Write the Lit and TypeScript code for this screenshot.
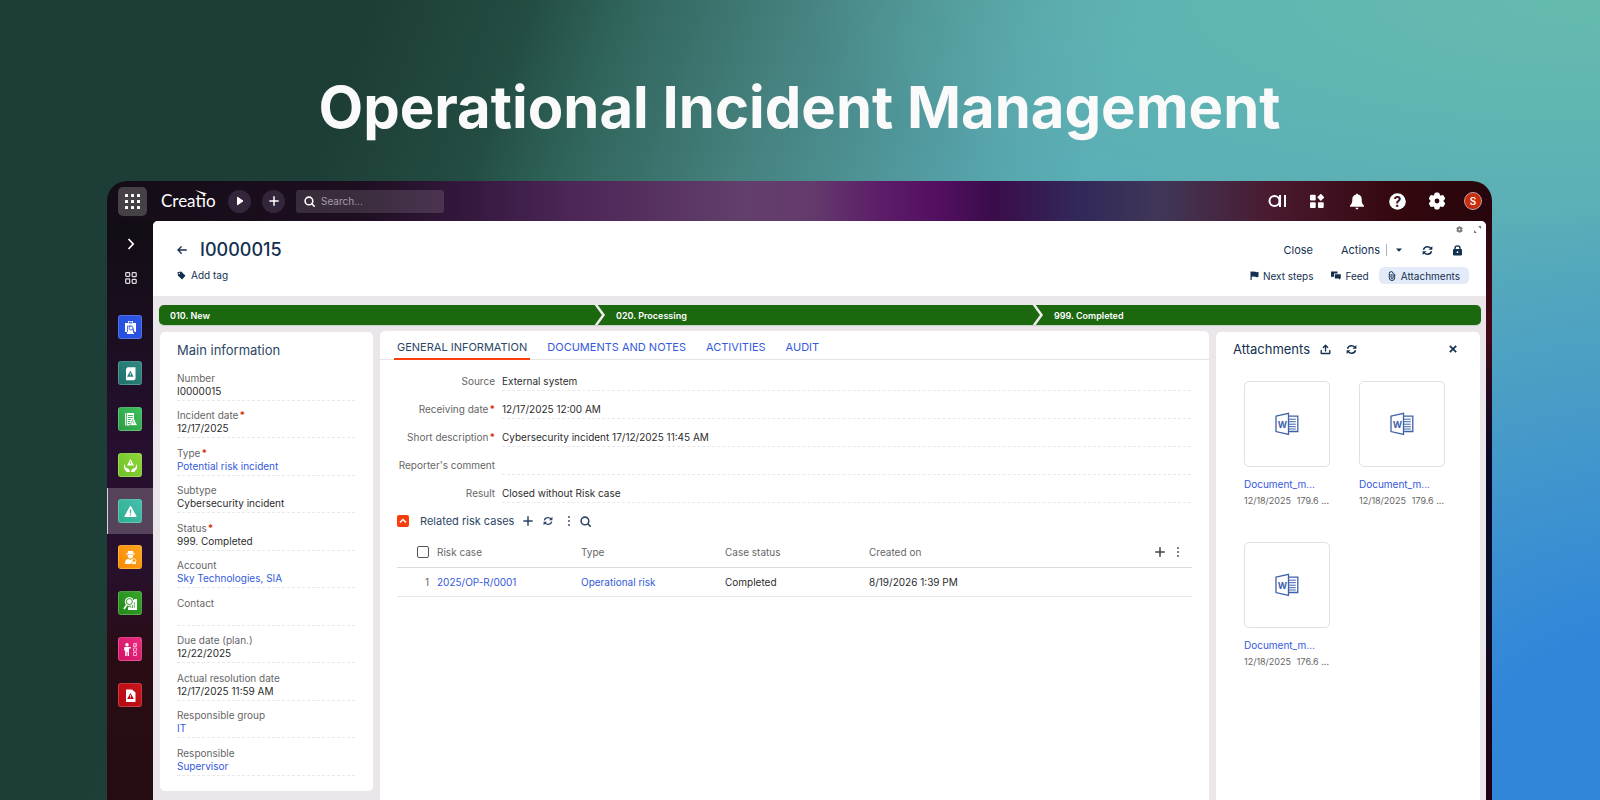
import { LitElement, html, css, svg } from "lit";
import { customElement } from "lit/decorators.js";
import { classMap } from "lit/directives/class-map.js";

const icon = (w: number, h: number, box: string, body: unknown) =>
  html`<svg class="icon" width=${w} height=${h} viewBox=${box} aria-hidden="true">${body}</svg>`;

const refresh = (s: number) => icon(s, s, "0 0 12 12", svg`
  <g fill="none" stroke="currentColor" stroke-width="1.6">
    <path d="M1.6 5.2C2.2 3 4 1.9 6 1.9c1.5 0 2.8.7 3.7 1.8"/><path d="M10.4 6.8C9.8 9 8 10.1 6 10.1c-1.5 0-2.8-.7-3.7-1.8"/>
  </g><path fill="currentColor" d="M11.3 1v4.2H7.1zM.7 11V6.8h4.2z"/>`);
const plus = (s: number) => icon(s, s, "0 0 12 12", svg`<path d="M6 1v10M1 6h10" stroke="currentColor" stroke-width="1.8" stroke-linecap="round"/>`);
const dots = () => icon(4, 12, "0 0 4 12", svg`<g fill="currentColor"><circle cx="2" cy="2" r=".9"/><circle cx="2" cy="6" r=".9"/><circle cx="2" cy="10" r=".9"/></g>`);
const search = (s: number) => icon(s, s, "0 0 12 12", svg`<g fill="none" stroke="currentColor" stroke-width="1.7" stroke-linecap="round"><circle cx="5.4" cy="5.4" r="4.2"/><path d="M8.8 8.8l2.3 2.3"/></g>`);
const gear = (s: number) => icon(s, s, "0 0 20 20", svg`
  <circle cx="10" cy="10" r="5" fill="none" stroke="currentColor" stroke-width="4.6"/>
  <g fill="currentColor">${[0, 60, 120, 180, 240, 300].map(a => svg`<rect x="7" y="0.6" width="6" height="5.4" rx="2" transform=${`rotate(${a} 10 10)`}/>`)}</g>`);
const word = () => icon(24, 24, "0 0 24 24", svg`
  <g fill="none" stroke="#3f62a8" stroke-width="1.3"><path d="M1 4.2L13.500 1.400v21L1 19.600z"/><path d="M13.500 4.200h9.300v15.300h-9.300"/>
  <path d="M14 7.200h6.800M14 9.700h6.800M14 12.200h6.800M14 14.700h6.800M14 17h6.800" stroke-width="1"/></g>
  <text x="7.300" y="15.500" text-anchor="middle" font-size="9" font-weight="700" fill="#3f62a8">W</text>`);

const appIcons = [
  { from: "#2450dc", to: "#2e55e6", body: svg`<path fill="#fff" d="M2 3h3V1h5v2h3v9h-2v2H4v-2H2z"/><path fill="none" stroke="#2b50dd" stroke-width=".8" d="M6 3h3V2H6zM4.500 12V6M4.500 6h4M10.500 13V8.500"/><circle cx="8" cy="8" r="2" fill="none" stroke="#2b50dd" stroke-width=".8"/><path d="M9.500 9.500l2 2.500" stroke="#2b50dd" stroke-width=".9"/>` },
  { from: "#1f6f6b", to: "#2f8a80", body: svg`<path fill="#fff" d="M3 3l1.500-1.700h8V13L11 14.200H3z"/><path fill="#267a73" d="M7.300 4.800l3.300 6H4z"/><path stroke="#fff" stroke-width=".8" d="M7.300 7v2M7.300 9.500v.7"/>` },
  { from: "#2f9a45", to: "#3cc35c", body: svg`<path fill="#fff" d="M2 1h9v6l3 6.500H2z"/><path fill="none" stroke="#33a94c" stroke-width=".9" d="M3.300 1v12.500M4.800 3.500h5M4.800 5.500h5M4.800 7.500h3M4.800 9.500h2.500M4.800 11.500h2"/><path fill="none" stroke="#33a94c" stroke-width=".7" d="M10.200 7l-3.500 6.500h7M10.300 9.500v2"/>` },
  { from: "#6fc025", to: "#8fd63a", body: svg`<path fill="#fff" d="M7.500 1L11 7.600H4zM1 6.500c1.200 0 1.300 1.500 1.400 3L5 10.500c1.500.8 1.800 1.800 1.800 3.500H4C2.500 12.500 1 11 1 9.500zM14 6.500c-1.200 0-1.300 1.500-1.400 3l-2.600 1c-1.500.8-1.800 1.800-1.800 3.500H11c1.500-1.500 3-3 3-4.500z"/><path stroke="#7ccb30" stroke-width=".9" d="M7.500 3.500v2.200"/>` },
  { from: "#2fae90", to: "#45bfae", body: svg`<path fill="#fff" stroke="#fff" stroke-width="1" stroke-linejoin="round" d="M7.500 2.200l5.700 10.300H1.800z"/><path stroke="#36b39b" stroke-width="1.300" d="M7.500 5.500v3.700M7.500 10.300v1.300"/>` },
  { from: "#f78a00", to: "#ffa51c", body: svg`<path fill="#fff" d="M5 1h5l.5 2.500H12v1H3v-1h1.500zM4.700 5h5.600c0 2-1 3.500-2.800 3.500S4.700 7 4.700 5zM2 14c0-3.500 1-5 3.500-5.300l2 1.300 2-1.300C12 9 13 10.500 13 14z"/><circle cx="11" cy="10.500" r="1.900" fill="#ff9a0c" stroke="#fff" stroke-width=".8"/><path d="M9.500 12l-2 2" stroke="#ff9a0c" stroke-width=".9"/>` },
  { from: "#24871c", to: "#36a528", body: svg`<path fill="#fff" d="M8 4h3V3h3v11H5v-2.500l3-1.500z"/><circle cx="6.300" cy="5.600" r="4" fill="#fff" stroke="#fff" stroke-width="1"/><circle cx="6.300" cy="5.600" r="3" fill="none" stroke="#2c9622"/><path stroke="#fff" stroke-width="1.600" d="M3.800 8.600L1 13"/><path stroke="#2c9622" stroke-width=".7" d="M9.500 9v3M11.300 6v6M7.800 10v2"/>` },
  { from: "#d01466", to: "#ea2b80", body: svg`<circle cx="4" cy="2.700" r="1.700" fill="#fff"/><path fill="#fff" d="M1.500 5h6.300v1.600H6V14H4.500v-4h-.8v4H2.200V8.500H1z"/><path fill="none" stroke="#ffb5d2" stroke-width=".9" d="M10.500 1.500h3v3h-3zM10.500 6h3v3h-3zM10.500 10.500h3v3h-3zM10.500 3l1 1 2-2.500"/>` },
  { from: "#b40a10", to: "#c8151c", body: svg`<path fill="#fff" d="M3 1.500h6l3.500 3V14H3z"/><path fill="#bb0d14" d="M7.500 5l3.400 6H4.100z"/><path stroke="#fff" stroke-width=".8" d="M7.500 7v2M7.500 9.600v.7"/>` },
];

const mainFields = [
  { label: "Number", value: "I0000015" },
  { label: "Incident date", value: "12/17/2025", required: true },
  { label: "Type", value: "Potential risk incident", required: true, link: true },
  { label: "Subtype", value: "Cybersecurity incident" },
  { label: "Status", value: "999. Completed", required: true },
  { label: "Account", value: "Sky Technologies, SIA", link: true },
  { label: "Contact", value: "" },
  { label: "Due date (plan.)", value: "12/22/2025" },
  { label: "Actual resolution date", value: "12/17/2025 11:59 AM" },
  { label: "Responsible group", value: "IT", link: true },
  { label: "Responsible", value: "Supervisor", link: true },
];

const generalFields = [
  { id: "source", label: "Source", value: "External system" },
  { id: "received", label: "Receiving date", value: "12/17/2025 12:00 AM", required: true },
  { id: "description", label: "Short description", value: "Cybersecurity incident 17/12/2025 11:45 AM", required: true },
  { id: "comment", label: "Reporter's comment", value: "" },
  { id: "result", label: "Result", value: "Closed without Risk case" },
];

const files = [
  { name: "Document_m...", date: "12/18/2025", size: "179.6 ..." },
  { name: "Document_m...", date: "12/18/2025", size: "179.6 ..." },
  { name: "Document_m...", date: "12/18/2025", size: "176.6 ..." },
];

const base = css`
  :host { box-sizing: border-box; font-family: Inter, "Liberation Sans", sans-serif; }
  *, *::before, *::after { box-sizing: border-box; }
  button, input { font: inherit; color: inherit; border: 0; padding: 0; margin: 0; background: none; }
  button { cursor: pointer; display: inline-flex; align-items: center; justify-content: center; }
  a { color: #3459dc; text-decoration: none; }
  h1, h2, p, dl, dd, dt, ul { margin: 0; padding: 0; font-size: inherit; font-weight: inherit; }
  ul { list-style: none; }
  .icon { display: block; flex: none; }
  .required::after { content: "*"; color: #d8330d; font-weight: 700; margin-left: 1px; }
`;

@customElement("top-bar")
class TopBar extends LitElement {
  static styles = [base, css`
    :host { display: flex; align-items: center; height: 40px; padding: 0 10px 0 11px; color: #fff; }
    .apps { width: 29px; height: 29px; border-radius: 5px; background: #454147; }
    .logo { position: relative; width: 54px; margin: 0 13px 0 14px; font-family: Lato, sans-serif; font-size: 17px; line-height: 24px; }
    .swoosh { position: absolute; left: 34px; top: 1px; }
    .round { width: 23px; height: 23px; border-radius: 50%; background: #33263a; margin-right: 11px; }
    .search { display: flex; align-items: center; gap: 6px; width: 148px; height: 23px; padding: 0 8px; border-radius: 3px; background: rgb(255 255 255 / 13%); }
    .search input { flex: 1; min-width: 0; font-size: 10px; outline: 0; }
    .search input::placeholder { color: #a79bab; opacity: 1; }
    .tools { display: flex; align-items: center; gap: 20px; margin-left: auto; }
    .tools button { width: 20px; height: 24px; }
    .tools .avatar { width: 18px; height: 18px; margin-left: -3px; border: 1px solid #b9a4a8; border-radius: 50%; background: #cb2d0c; font-size: 10px; font-weight: 600; }
  `];
  render() {
    return html`
      <button class="apps" aria-label="Applications">${icon(15, 15, "0 0 15 15", svg`<g fill="#fff">${[0, 6, 12].map(y => [0, 6, 12].map(x => svg`<rect x=${x} y=${y} width="3" height="3" rx=".5"/>`))}</g>`)}</button>
      <div class="logo">Creatio<span class="swoosh">${icon(12, 5, "0 0 12 5", svg`<path fill="#fff" d="M0 0l12 3.500-3.500 1.200z"/>`)}</span></div>
      <button class="round" aria-label="Run process">${icon(10, 10, "0 0 10 10", svg`<path fill="#fff" d="M2.500 1.200l5.500 3.800-5.500 3.800z" stroke="#fff" stroke-linejoin="round"/>`)}</button>
      <button class="round" aria-label="Add">${plus(10)}</button>
      <label class="search">${search(11)}<input type="search" aria-label="Search" placeholder="Search..." /></label>
      <div class="tools">
        <button aria-label="AI assistant">${icon(19, 14, "0 0 19 14", svg`<g fill="none" stroke="#fff" stroke-width="2"><circle cx="6.500" cy="7" r="5"/><path d="M12 1v12M17 1v12"/></g>`)}</button>
        <button aria-label="Widgets">${icon(14, 14, "0 0 14 14", svg`<g fill="#fff"><rect y=".8" width="5.700" height="5.700" rx="1"/><rect y="8.300" width="5.700" height="5.700" rx="1"/><rect x="8" y="8.300" width="5.700" height="5.700" rx="1"/><path d="M10.800-.3L14.400 3.300 10.800 6.900 7.200 3.300z"/></g>`)}</button>
        <button aria-label="Notifications">${icon(14, 17, "0 0 14 17", svg`<path fill="#fff" d="M6 1.500q1-1.800 2 0 3.500.8 3.700 4.500c0 4 .5 4.500 2.300 6.800v1H0v-1C1.800 10.500 2.300 10 2.300 6 2.500 2.300 6 1.500 6 1.500zM5.500 14.700h3q-.2 1.700-1.500 1.700t-1.500-1.700z"/>`)}</button>
        <button aria-label="Help">${icon(17, 17, "0 0 17 17", svg`<circle cx="8.500" cy="8.500" r="8.300" fill="#fff"/><text x="8.500" y="13.500" text-anchor="middle" font-size="14" font-weight="700" fill="#3a1020">?</text>`)}</button>
        <button aria-label="Settings">${gear(18)}</button>
        <button class="avatar" aria-label="Profile">S</button>
      </div>`;
  }
}

@customElement("side-bar")
class SideBar extends LitElement {
  static styles = [base, css`
    :host { display: flex; flex-direction: column; width: 46px; color: #fff; }
    .nav { display: flex; align-items: center; justify-content: center; height: 34px; margin-left: 1px; }
    .nav.first { margin-top: 6px; }
    .list { margin-top: 9px; }
    .item { display: flex; align-items: center; justify-content: flex-start; padding-left: 10px; height: 46px; width: 46px; border-left: 1px solid transparent; }
    .item.active { background: rgb(255 255 255 / 22%); border-left-color: #d9d0dc; }
    .tile { display: flex; align-items: center; justify-content: center; width: 24px; height: 24px; border-radius: 3px; border: 1px solid rgb(255 255 255 / 18%); }
  `];
  render() {
    return html`
      <button class="nav first" aria-label="Expand">${icon(8, 12, "0 0 8 12", svg`<path d="M1.500 1l4.700 5-4.700 5" fill="none" stroke="#fff" stroke-width="1.700"/>`)}</button>
      <button class="nav" aria-label="Workplaces">${icon(12, 12, "0 0 12 12", svg`<g fill="none" stroke="#e4dfe6" stroke-width="1.200"><rect x=".7" y=".7" width="4" height="3.600" rx=".8"/><rect x="7.200" y=".7" width="4" height="4" rx=".8"/><rect x=".7" y="6.800" width="4" height="4.500" rx=".8"/><rect x="7.200" y="7.400" width="4" height="4" rx=".8"/></g>`)}</button>
      <ul class="list">
        ${appIcons.map((a, i) => html`<li><button class=${classMap({ item: true, active: i === 4 })} aria-label=${`Section ${i + 1}`}>
          <span class="tile" style=${`background:linear-gradient(45deg,${a.from},${a.to})`}>${icon(15, 15, "0 0 15 15", a.body)}</span></button></li>`)}
      </ul>`;
  }
}

@customElement("page-header")
class PageHeader extends LitElement {
  static styles = [base, css`
    :host { display: flex; justify-content: space-between; height: 75px; padding: 0 17px 0 24px; background: #fff; border-radius: 5px 5px 0 0; color: #14304f; font-size: 10px; }
    .left { padding-top: 17px; }
    .title { display: flex; align-items: center; gap: 13px; height: 24px; }
    .title h1 { font-size: 18px; line-height: 24px; font-weight: 500; }
    .tag { gap: 5px; height: 16px; margin-top: 5px; }
    .right { display: flex; flex-direction: column; align-items: flex-end; }
    .tiny { display: flex; gap: 11px; height: 17px; align-items: center; margin-right: -12px; color: #777; }
    .actions { display: flex; align-items: center; height: 24px; margin-right: 7px; font-size: 11px; }
    .close { margin-right: 28px; }
    .rule { width: 1px; height: 12px; margin: 0 9px 0 6px; background: #a9b3bf; }
    .caret { margin-right: 20px; }
    .lock { margin-left: 20px; }
    .views { display: flex; align-items: center; gap: 10px; margin-top: 5px; }
    .views button { gap: 4px; height: 17px; }
    .views .feed { margin-left: 8px; }
    .views .on { padding: 0 9px; gap: 5px; border-radius: 5px; background: #e3ebfb; }
  `];
  render() {
    return html`
      <div class="left">
        <div class="title">
          <button aria-label="Back">${icon(10, 10, "0 0 10 10", svg`<path fill="none" stroke="currentColor" stroke-width="1.300" stroke-linecap="round" d="M1 5h8.300M4.200 1.700L1 5l3.200 3.300"/>`)}</button>
          <h1>I0000015</h1>
        </div>
        <button class="tag">${icon(9, 9, "0 0 9 9", svg`<path fill="currentColor" fill-rule="evenodd" d="M.5 1.200L4.200.6l4.300 4.200-3.400 3.800L1 4.700zM2.300 1.800a.7.7 0 1 0 0 1.400.7.7 0 0 0 0-1.400z"/>`)}Add tag</button>
      </div>
      <div class="right">
        <div class="tiny">
          <button aria-label="Page settings">${gear(7)}</button>
          <button aria-label="Full screen">${icon(7, 7, "0 0 7 7", svg`<path fill="currentColor" d="M4 0h3v3zM0 4v3h3z"/>`)}</button>
        </div>
        <div class="actions">
          <button class="close">Close</button><button>Actions</button><span class="rule"></span>
          <button class="caret" aria-label="More actions">${icon(6, 4, "0 0 6 4", svg`<path fill="currentColor" d="M0 .5h6L3 3.800z"/>`)}</button>
          <button aria-label="Refresh">${refresh(11)}</button>
          <button class="lock" aria-label="Access rights">${icon(9, 11, "0 0 9 11", svg`<rect y="4" width="9" height="6.500" rx="1" fill="currentColor"/><path fill="none" stroke="currentColor" stroke-width="1.400" d="M2 4.500V3.200a2.500 2.300 0 0 1 5 0v1.300"/><circle cx="4.500" cy="7.200" r=".9" fill="#fff"/>`)}</button>
        </div>
        <div class="views">
          <button>${icon(9, 9, "0 0 9 9", svg`<path fill="currentColor" d="M.5.5h1.200v.3q1.700-.8 3.400 0t3.400 0v5q-1.700.8-3.400 0t-3.400 0V9H.5z"/>`)}Next steps</button>
          <button class="feed">${icon(10, 9, "0 0 10 9", svg`<path fill="currentColor" d="M0 .5h6.500v2H3v3.200H1.500L.5 6.600v-1H0zM3.800 3.200h6v4.300H9v1.300L7.700 7.500H3.800z"/>`)}Feed</button>
          <button class="on">${icon(8, 10, "0 0 8 10", svg`<path fill="none" stroke="currentColor" stroke-width="1" d="M6.700 2.800v4a2.700 2.700 0 0 1-5.400 0V2.500a1.900 1.900 0 0 1 3.800 0v4.200a1 1 0 0 1-2 0V3"/>`)}Attachments</button>
        </div>
      </div>`;
  }
}

@customElement("stage-bar")
class StageBar extends LitElement {
  static styles = [base, css`
    :host { display: block; }
    .stages { display: grid; grid-template-columns: 446fr 438fr 438fr; height: 20px; border-radius: 5px; overflow: hidden; background: #1c680f; box-shadow: 0 1px 1px #c4d1c2; }
    .stage { display: flex; align-items: center; justify-content: space-between; padding-left: 11px; color: #fff; font-size: 9px; font-weight: 600; }
    .stage .icon { margin-right: -1px; }
  `];
  render() {
    const names = ["010. New", "020. Processing", "999. Completed"];
    return html`<div class="stages">${names.map((n, i) => html`<button class="stage"><span>${n}</span>
      ${i < 2 ? icon(12, 20, "0 0 12 20", svg`<path d="M1.500 -1L9.500 10L1.500 21" fill="none" stroke="#f0edf0" stroke-width="2.500"/>`) : ""}</button>`)}</div>`;
  }
}

@customElement("main-info")
class MainInfo extends LitElement {
  static styles = [base, css`
    :host { display: flex; flex-direction: column; padding: 8px 18px 15px 17px; border-radius: 5px; background: #fff; }
    .head { height: 23px; line-height: 20px; font-size: 13px; color: #2d4765; }
    .fields { flex: 1; display: grid; grid-auto-rows: minmax(37px, 1fr); font-size: 10px; }
    .field { display: flex; flex-direction: column; justify-content: flex-end; border-bottom: 1px dashed #e9e9e9; }
    dt { line-height: 13px; color: #666; }
    dd { height: 15px; line-height: 13px; color: #2b2b2b; }
  `];
  render() {
    return html`<h2 class="head">Main information</h2>
      <dl class="fields">${mainFields.map(f => html`<div class="field">
        <dt class=${classMap({ required: !!f.required })}>${f.label}</dt>
        <dd>${f.link ? html`<a href="#">${f.value}</a>` : f.value}</dd></div>`)}</dl>`;
  }
}

@customElement("incident-details")
class IncidentDetails extends LitElement {
  static styles = [base, css`
    :host { display: block; border-radius: 5px 5px 0 0; background: #fff; font-size: 10px; color: #2b2b2b; }
    .tabs { display: flex; gap: 14px; height: 29px; padding: 0 14px; border-bottom: 1px solid #e4e4e4; }
    .tab { height: 29px; padding: 5px 3px 0; font-size: 11px; color: #3459dc; border-bottom: 2px solid transparent; }
    .tab.on { color: #2d4765; border-color: #f93d0b; }
    .form { padding: 3px 18px 0 17px; }
    .row { display: grid; grid-template-columns: 98px 1fr; column-gap: 7px; height: 28px; align-items: end; }
    .row label { text-align: right; line-height: 19px; height: 19px; color: #666; white-space: nowrap; }
    .row input { height: 19px; min-width: 0; padding-bottom: 1px; border-bottom: 1px dashed #e9e9e9; outline: 0; }
    .section { display: flex; align-items: center; height: 20px; margin: 8px 17px 0; color: #2d4765; font-size: 11px; }
    .toggle { width: 12px; height: 12px; margin-right: 11px; border-radius: 2px; background: #f93d0b; color: #fff; }
    .section .add { margin: 0 10px 0 9px; }
    .section .more { margin: 0 9px 0 14px; }
    .grid { width: calc(100% - 34px); margin: 6px 17px 0; border-collapse: collapse; table-layout: fixed; }
    .grid th { height: 30px; padding: 0; text-align: left; font-weight: 400; color: #666; border-bottom: 1px solid #dcdcdc; }
    .grid td { height: 29px; padding: 0; border-bottom: 1px solid #e7e7e7; }
    .check { width: 40px; }
    .col { width: 144px; }
    .check input { display: block; appearance: none; width: 12px; height: 12px; margin-left: 20px; border: 1px solid #555; border-radius: 2px; }
    .grid td.num { padding-left: 28px; color: #666; }
    .tools { display: flex; align-items: center; justify-content: flex-end; gap: 11px; padding-right: 12px; color: #444; }
  `];
  render() {
    const tabs = ["GENERAL INFORMATION", "DOCUMENTS AND NOTES", "ACTIVITIES", "AUDIT"];
    return html`
      <div class="tabs" role="tablist">${tabs.map((t, i) => html`<button role="tab" aria-selected=${i === 0 ? "true" : "false"} class=${classMap({ tab: true, on: i === 0 })}>${t}</button>`)}</div>
      <div class="form">${generalFields.map(f => html`<div class="row">
        <label for=${f.id} class=${classMap({ required: !!f.required })}>${f.label}</label><input id=${f.id} .value=${f.value} /></div>`)}</div>
      <div class="section">
        <button class="toggle" aria-label="Collapse">${icon(8, 6, "0 0 8 6", svg`<path d="M1 4.500l3-3 3 3" fill="none" stroke="#fff" stroke-width="1.500"/>`)}</button>
        <h2>Related risk cases</h2>
        <button class="add" aria-label="Add risk case">${plus(10)}</button>
        <button aria-label="Refresh list">${refresh(10)}</button>
        <button class="more" aria-label="More">${dots()}</button>
        <button aria-label="Search list">${search(11)}</button>
      </div>
      <table class="grid">
        <thead><tr><th class="check"><input type="checkbox" aria-label="Select all" /></th><th class="col">Risk case</th><th class="col">Type</th><th class="col">Case status</th><th>Created on</th>
          <th><div class="tools"><button aria-label="Add column">${plus(10)}</button><button aria-label="Column menu">${dots()}</button></div></th></tr></thead>
        <tbody><tr><td class="num">1</td><td><a href="#">2025/OP-R/0001</a></td><td><a href="#">Operational risk</a></td><td>Completed</td><td colspan="2">8/19/2026 1:39 PM</td></tr></tbody>
      </table>`;
  }
}

@customElement("attachments-panel")
class AttachmentsPanel extends LitElement {
  static styles = [base, css`
    :host { display: block; padding: 7px 17px 0; border-radius: 5px 5px 0 0; background: #fff; color: #14304f; }
    .head { display: flex; align-items: center; height: 20px; }
    .head h2 { font-size: 13px; margin-right: 10px; }
    .upload { margin-right: 15px; }
    .close { margin-left: auto; margin-right: 6px; }
    .files { display: grid; grid-template-columns: repeat(2, 86px); column-gap: 29px; padding: 22px 0 0 11px; }
    .file { height: 161px; }
    .thumb { display: flex; align-items: center; justify-content: center; height: 86px; border: 1px solid #e0e0e0; border-radius: 5px; }
    .name { display: block; margin-top: 9px; font-size: 10px; line-height: 16px; }
    .meta { display: flex; justify-content: space-between; padding-right: 1px; font-size: 9px; line-height: 18px; color: #666; white-space: nowrap; }
  `];
  render() {
    return html`
      <div class="head"><h2>Attachments</h2>
        <button class="upload" aria-label="Upload">${icon(11, 11, "0 0 11 11", svg`<path fill="none" stroke="currentColor" stroke-width="1.300" stroke-linecap="round" stroke-linejoin="round" d="M5.500 7V1.500M3.300 3.500l2.200-2.200 2.200 2.200M1.200 6.500v3h8.600v-3"/>`)}</button>
        <button aria-label="Refresh">${refresh(11)}</button>
        <button class="close" aria-label="Close panel">${icon(8, 8, "0 0 8 8", svg`<path d="M.8.8l6.400 6.400M7.200.8L.8 7.200" stroke="currentColor" stroke-width="1.700"/>`)}</button>
      </div>
      <ul class="files">${files.map(f => html`<li class="file"><div class="thumb">${word()}</div>
        <a class="name" href="#">${f.name}</a><div class="meta"><span>${f.date}</span><span>${f.size}</span></div></li>`)}</ul>`;
  }
}

@customElement("app-root")
class AppRoot extends LitElement {
  static styles = [base, css`
    :host {
      display: flex; flex-direction: column; min-height: 100vh; padding: 0 108px 0 107px; overflow: hidden;
      background:
        radial-gradient(ellipse 50% 75% at 106% 100%, #3186da 0%, #3186da 30%, rgb(49 134 218 / 0%) 100%),
        radial-gradient(ellipse 50% 30% at 100% 0%, #66bbae 0%, rgb(102 187 174 / 0%) 100%),
        linear-gradient(110deg, #1d3e36 0%, #1d3e36 20%, #234c43 28%, #2f645a 33%, #45807d 42%, #57a6ae 56%, #5aaeb6 61%, #5aaeb8 100%);
    }
    .headline { padding: 68px 0 35px; text-align: center; color: #fafafa; font-size: 58px; line-height: 78px; font-weight: 700; }
    .window {
      flex: 1; display: flex; flex-direction: column; border-radius: 20px 20px 0 0; overflow: hidden;
      background:
        linear-gradient(180deg, #120d15 0, #190e1d 15%, #270f2f 40%, #26102c 60%, #2a0d14 75%, #250c12 100%) 0 100% / 46px calc(100% - 40px) no-repeat,
        linear-gradient(180deg, #2a0710 0, #450816 19%, #200a20 30%, #04082a 42%, #0a0c2a 70%, #180414 82%, #200012 100%) 100% 100% / 12px calc(100% - 40px) no-repeat,
        linear-gradient(90deg, #140d17 0%, #1d0e20 18%, #35183e 26%, #4a2555 33%, #633f6c 46%, #633a6c 51%, #5c1c68 56%, #540f60 60%, #3a0c4a 64%, #32285a 70%, #403758 76%, #4a1a30 84%, #34080f 93%, #27050c 100%);
    }
    .body { flex: 1; display: flex; padding-right: 6px; }
    .page { flex: 1; min-width: 0; display: flex; flex-direction: column; border-radius: 5px 5px 0 0; background: #ebe6ea; }
    .stages { margin: 9px 5px 6px 6px; }
    .columns { flex: 1; display: grid; grid-template-columns: 213px minmax(0, 1fr) 264px; gap: 7px; padding: 0 6px 0 7px; }
    .main { margin: 1px 0 9px; }
    .attachments { margin-top: 1px; }
  `];
  render() {
    return html`
      <h1 class="headline">Operational Incident Management</h1>
      <div class="window">
        <top-bar></top-bar>
        <div class="body">
          <side-bar></side-bar>
          <main class="page">
            <page-header></page-header>
            <stage-bar class="stages"></stage-bar>
            <div class="columns">
              <main-info class="main"></main-info>
              <incident-details></incident-details>
              <attachments-panel class="attachments"></attachments-panel>
            </div>
          </main>
        </div>
      </div>`;
  }
}
